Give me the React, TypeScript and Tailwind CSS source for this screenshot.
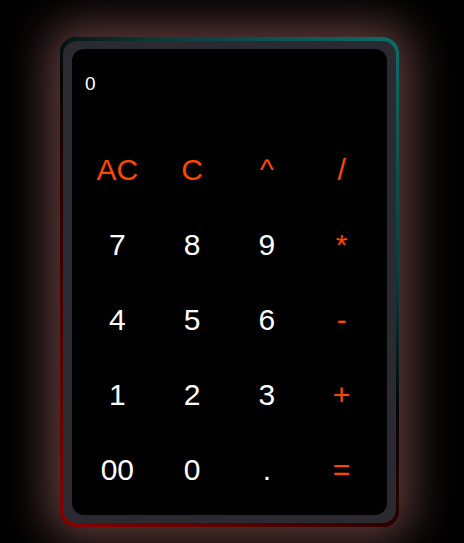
const keys: { label: string; op?: boolean }[] = [
  { label: "AC", op: true },
  { label: "C", op: true },
  { label: "^", op: true },
  { label: "/", op: true },
  { label: "7" },
  { label: "8" },
  { label: "9" },
  { label: "*", op: true },
  { label: "4" },
  { label: "5" },
  { label: "6" },
  { label: "-", op: true },
  { label: "1" },
  { label: "2" },
  { label: "3" },
  { label: "+", op: true },
  { label: "00" },
  { label: "0" },
  { label: "." },
  { label: "=", op: true },
];

export default function App() {
  return (
    <div className="min-h-screen bg-black pt-[37px] pl-[60px] font-['Liberation_Sans',Arial,sans-serif]">
      <div className="w-[339px] h-[490px] rounded-[16px] bg-[linear-gradient(45deg,#8b0000_0%,#3a0000_35%,#050505_55%,#0a3a38_70%,#0a6e68_100%)] shadow-[0_0_45px_12px_rgba(115,72,72,0.85)] px-[3px] py-[4px]">
        <div className="h-full rounded-[14px] bg-[#2a2a30] px-[9px] py-[8px]">
          <div className="h-full rounded-[12px] bg-black flex flex-col">
            <div className="h-[83px] pt-[21px] pl-[13px] text-[19px] leading-normal text-white">0</div>
            <div className="grid grid-cols-4 auto-rows-[75px] px-2">
              {keys.map((k) => (
                <button
                  key={k.label}
                  className={`flex items-center justify-center text-[30px] leading-none ${k.op ? "text-[#ff4500]" : "text-white"}`}
                >
                  {k.label}
                </button>
              ))}
            </div>
          </div>
        </div>
      </div>
    </div>
  );
}
